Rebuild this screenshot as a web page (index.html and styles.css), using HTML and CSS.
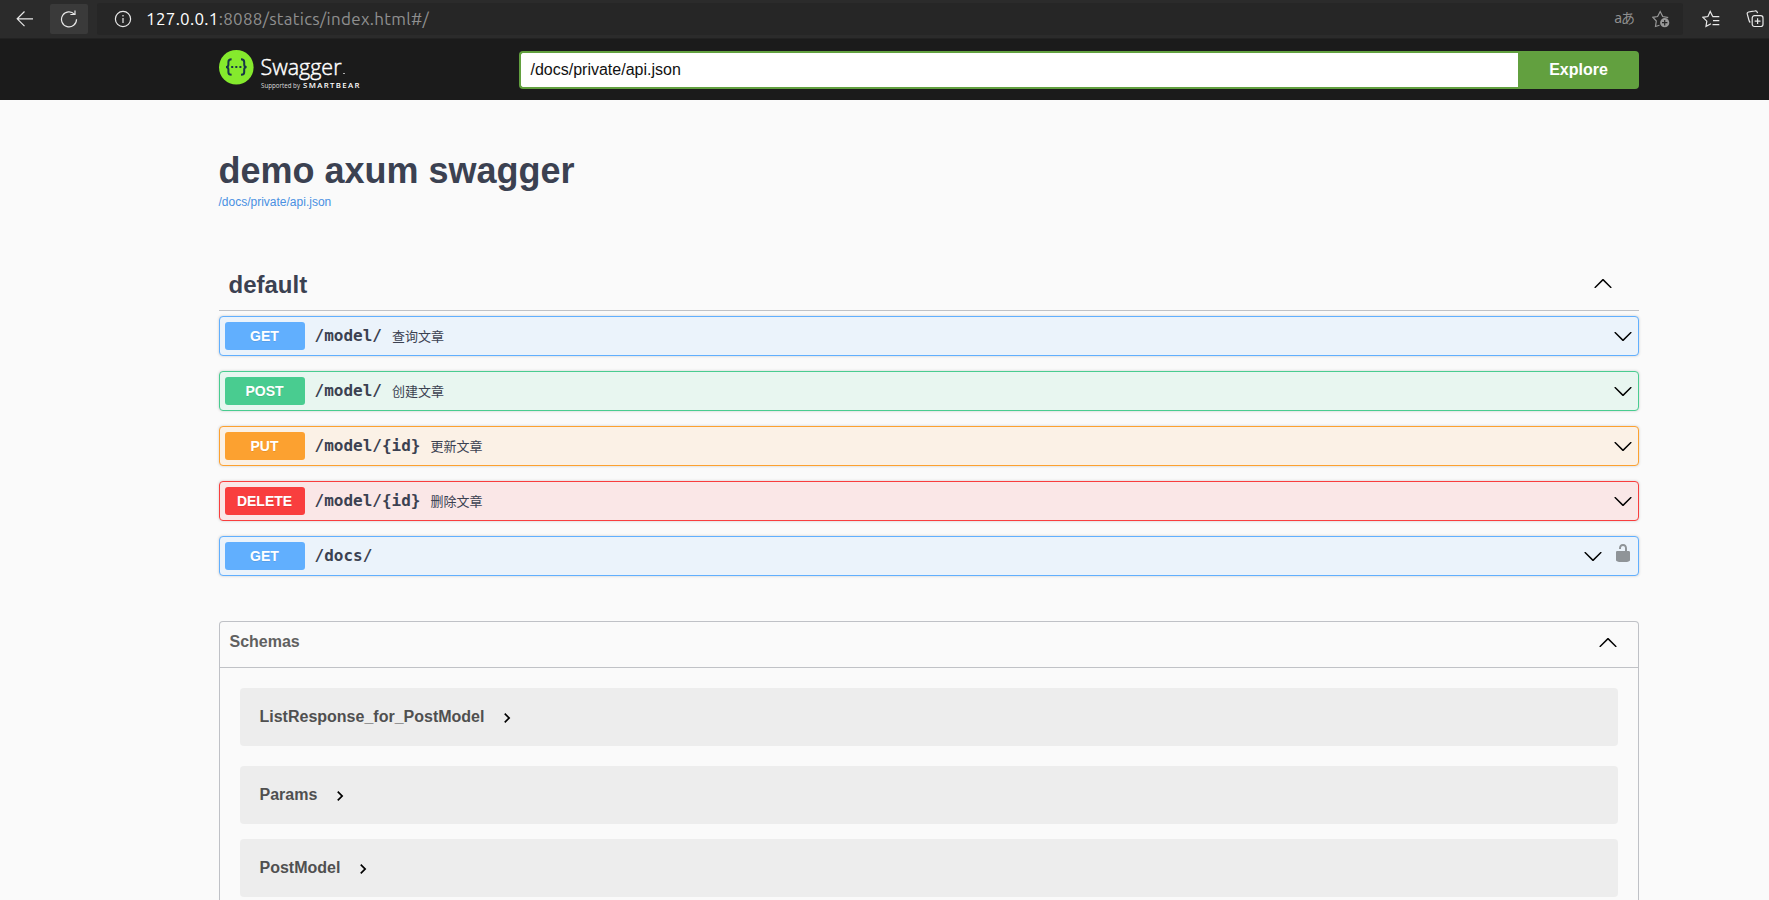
FILE: index.html
```html
<!DOCTYPE html>
<html lang="zh">
<head>
<meta charset="utf-8">
<title>Swagger UI</title>
<link rel="stylesheet" href="styles.css">
</head>
<body>
<svg class="defs" width="0" height="0">
  <symbol id="down" viewBox="0 0 20 20"><path d="M17.418 6.109c.272-.268.709-.268.979 0s.271.701 0 .969l-7.908 7.83c-.27.268-.707.268-.979 0l-7.908-7.83c-.27-.268-.27-.701 0-.969.271-.268.709-.268.979 0L10 13.25l7.418-7.141z"/></symbol>
  <symbol id="up" viewBox="0 0 20 20"><path d="M17.418 14.908c.272.268.709.268.979 0s.271-.701 0-.969l-7.908-7.83c-.27-.268-.707-.268-.979 0l-7.908 7.83c-.27.268-.27.701 0 .969.271.268.709.268.979 0L10 7.767l7.418 7.141z"/></symbol>
  <symbol id="right" viewBox="0 0 24 24"><path d="M10 6L8.59 7.41 13.17 12l-4.58 4.59L10 18l6-6z"/></symbol>
  <symbol id="unlocked" viewBox="0 0 20 20"><path d="M15.8 8H14V5.6C14 2.703 12.665 1 10 1 7.334 1 6 2.703 6 5.6V6h2v-.801C8 3.754 8.797 3 10 3c1.203 0 2 .754 2 2.199V8H4c-.553 0-1 .646-1 1.199V17c0 .549.428 1.139.951 1.307l1.197.387C5.672 18.861 6.55 19 7.1 19h5.8c.549 0 1.428-.139 1.951-.307l1.196-.387c.524-.167.953-.757.953-1.306V9.199C17 8.646 16.352 8 15.8 8z"/></symbol>
</svg>
<header class="browser">
  <svg class="back" width="18" height="18" viewBox="0 0 18 18"><path d="M8.500 1.500 1.200 8.800l7.300 7.300M1.200 8.800H17"/></svg>
  <div class="reload"><svg width="18" height="18" viewBox="0 0 18 18"><path d="M16.500 9.200A7.500 7.500 0 1 1 14.500 4.300M10.400 4.500H15V.4"/></svg></div>
  <div class="address">
    <svg class="info-icon" width="18" height="18" viewBox="0 0 18 18"><circle cx="9" cy="9" r="7.600"/><path d="M9 8v5M9 5v1.500"/></svg>
    <span class="url"><b>127.0.0.1</b>:8088/statics/index.html#/</span>
    <span class="translate">aあ</span>
    <svg class="star" width="18" height="18" viewBox="0 0 18 18"><path d="M7.500 15.300 3.500 16.500 4.300 11 .9 7.300l4.700-.8L8.200 1.500l2.500 5 4.800.8-.7.800"/><circle class="badge" cx="12.700" cy="12.700" r="4.600"/><path class="plus" d="M12.700 10v5.400M10 12.700h5.400"/></svg>
  </div>
  <svg class="favorites" width="18" height="18" viewBox="0 0 18 18"><path d="M9 13.700 4 16.300 4.800 11.200.9 7.300l5-.8L8.200 1.500l2.500 5M10.500 6.700h6.800M11 10.700h6.300M10.500 14.700h6.800"/></svg>
  <svg class="collections" width="18" height="18" viewBox="0 0 18 18"><rect x="6.200" y="5.700" width="10.800" height="10.800" rx="2.200"/><path d="M11.600 8.200v5.800M8.700 11.100h5.800M4.300 12.500C3.400 11.800 3.200 11.200 2.900 10L1.300 4.200C1 3 1.400 2.300 2.600 2L8.800.9c1.300-.3 2.200.2 2.500 1.400l.2.800"/></svg>
</header>
<div class="topbar">
  <div class="wrap topbar-row">
    <svg class="logo" width="150" height="42" viewBox="0 0 150 42">
      <circle cx="17.300" cy="17.300" r="17.300"/>
      <path class="brace" d="M12.600 9.300c-2.500 0-3.200.8-3.200 2.600v2.600c0 1.600-.7 2.500-2.400 2.500 1.700 0 2.400.9 2.400 2.500v2.700c0 1.800.7 2.600 3.200 2.600M22 9.300c2.500 0 3.200.8 3.200 2.600v2.600c0 1.600.7 2.500 2.400 2.500-1.700 0-2.400.9-2.400 2.500v2.700c0 1.800-.7 2.600-3.200 2.600"/>
      <path class="dots" d="M12.200 16h2v2h-2zM16.300 16h2v2h-2zM20.400 16h2v2h-2z"/>
      <text class="brand" x="41.500" y="24.600" textLength="81" lengthAdjust="spacingAndGlyphs">Swagger</text>
      <path class="tm" d="M124 23.500h2"/>
      <text class="supported" x="42" y="38" textLength="39" lengthAdjust="spacingAndGlyphs">Supported by</text>
      <text class="smartbear" x="84" y="38" textLength="56.500">SMARTBEAR</text>
    </svg>
    <form class="search"><div class="field">/docs/private/api.json</div><div class="explore">Explore</div></form>
  </div>
</div>
<main class="wrap">
  <section class="info">
    <h1>demo axum swagger</h1>
    <a>/docs/private/api.json</a>
  </section>
  <h2 class="tag"><span>default</span><svg><use href="#up"/></svg></h2>
  <div class="ops">
    <div class="op get"><span class="method">GET</span><code>/model/</code><span class="desc">查询文章</span><svg><use href="#down"/></svg></div>
    <div class="op post"><span class="method">POST</span><code>/model/</code><span class="desc">创建文章</span><svg><use href="#down"/></svg></div>
    <div class="op put"><span class="method">PUT</span><code>/model/{id}</code><span class="desc">更新文章</span><svg><use href="#down"/></svg></div>
    <div class="op delete"><span class="method">DELETE</span><code>/model/{id}</code><span class="desc">删除文章</span><svg><use href="#down"/></svg></div>
    <div class="op get"><span class="method">GET</span><code>/docs/</code><span class="desc"></span><svg><use href="#down"/></svg><svg class="lock"><use href="#unlocked"/></svg></div>
  </div>
  <section class="models">
    <h3><span>Schemas</span><svg><use href="#up"/></svg></h3>
    <div class="model first"><span>ListResponse_for_PostModel</span><svg><use href="#right"/></svg></div>
    <div class="model"><span>Params</span><svg><use href="#right"/></svg></div>
    <div class="model last"><span>PostModel</span><svg><use href="#right"/></svg></div>
  </section>
</main>
</body>
</html>
```

FILE: styles.css
```css
* { box-sizing: border-box; }
html, body { height: 100%; }
body { margin: 0; background: #fafafa; color: #3b4151; font-family: "Liberation Sans", Arial, sans-serif; overflow: hidden; }
svg { display: block; flex: none; width: 20px; height: 20px; }
.defs { position: absolute; width: 0; height: 0; }
.wrap { width: 1420px; margin-left: 218.5px; }

.browser { display: flex; align-items: center; height: 39px; padding-left: 16px; background: #2b2b2b; border-bottom: 1px solid #222; }
.browser svg { width: 18px; height: 18px; fill: none; stroke: #e8e8e8; stroke-width: 1.2; }
.reload { display: flex; align-items: center; justify-content: center; width: 38px; height: 30px; margin-left: 16px; background: #3a3a3a; border-radius: 2px; }
.address { display: flex; align-items: center; width: 1586px; height: 32px; margin-left: 9px; padding: 0 13px 0 17px; background: #262626; border-radius: 3px; }
.url { margin-left: 14px; color: #8f8f8f; font: 17px/32px Ubuntu, "Noto Sans", sans-serif; letter-spacing: .29px; }
.url b { color: #fff; font-weight: 400; }
.translate { margin-left: auto; color: #8f8f8f; font: 14px "Noto Sans", "Noto Sans CJK JP", sans-serif; letter-spacing: -1px; line-height: 30px; padding-bottom: 2px; white-space: nowrap; }
.browser .star { margin-left: 18px; stroke: #999; }
.star .badge { fill: #999; stroke: none; }
.star .plus { stroke: #262626; }
.favorites { margin-left: 19px; }
.collections { margin-left: 26px; }

.topbar { height: 61px; background: #1b1b1b; }
.topbar-row { display: flex; padding-top: 11px; }
.logo { width: 150px; height: 42px; }
.logo circle { fill: #85ea2d; }
.brace { fill: none; stroke: #173647; stroke-width: 2; }
.dots { fill: #173647; }
.logo text { fill: #fff; font-family: "Open Sans", sans-serif; }
.logo .brand { font-size: 22px; font-weight: 300; stroke: #fff; stroke-width: .45; }
.tm { stroke: #aaa; }
.logo .supported { font-size: 6.8px; fill: #ddd; }
.smartbear { font-size: 7.800px; font-weight: 600; }
.search { display: flex; width: 1120px; height: 38px; margin: 1px 0 0 150px; }
.field { flex: 1; padding-left: 10px; border: 2px solid #62a03f; border-right: 0; border-radius: 4px 0 0 4px; background: #fff; color: #111; font-size: 16px; line-height: 33px; }
.explore { width: 121px; padding-left: 1px; border-radius: 0 4px 4px 0; background: #62a03f; color: #fff; font-size: 16px; font-weight: 700; line-height: 38px; text-align: center; }

.info { height: 160px; padding-top: 50px; }
.info h1 { margin: 0; font-size: 36px; line-height: 41px; }
.info a { display: block; margin-top: 4px; color: #4990e2; font-size: 12px; line-height: 14px; }
.tag { display: flex; justify-content: space-between; align-items: flex-start; height: 51px; margin: 0 0 5px; padding: 11px 26px 0 10px; border-bottom: 1px solid rgba(59,65,81,.3); font-size: 24px; line-height: 28px; }
.tag svg { margin-top: 2px; fill: #000; }
.ops { display: flex; flex-direction: column; gap: 15px; }
.op { display: flex; align-items: center; height: 40px; padding: 0 5px; border: 1px solid; border-radius: 4px; box-shadow: 0 0 3px rgba(0,0,0,.19); }
.op svg { fill: #000; }
.method { width: 80px; height: 28px; border-radius: 3px; color: #fff; font-size: 14px; font-weight: 700; line-height: 28px; text-align: center; text-shadow: 0 1px 0 rgba(0,0,0,.1); }
.op code { margin-left: 10px; color: #3b4151; font: 700 16px/20px "DejaVu Sans Mono", monospace; }
.desc { flex: 1; margin-left: 10px; color: #3b4151; font: 13px/20px "Liberation Sans", "Noto Sans CJK SC", sans-serif; padding-top: 2px; }
.get { border-color: #61affe; background: #ebf3fb; }
.get .method { background: #61affe; }
.post { border-color: #49cc90; background: #e8f6f0; }
.post .method { background: #49cc90; }
.put { border-color: #fca130; background: #fbf1e6; }
.put .method { background: #fca130; }
.delete { border-color: #f93e3e; background: #fae7e7; }
.delete .method { background: #f93e3e; }
.op .lock { margin: 0 0 6px 10px; fill: #8f9498; }

.models { height: 279px; margin-top: 45px; border: 1px solid rgba(59,65,81,.3); border-bottom: 0; border-radius: 4px 4px 0 0; }
.models h3 { display: flex; justify-content: space-between; height: 46px; margin: 0 0 20px; padding: 10px 20px 0 10px; border-bottom: 1px solid rgba(59,65,81,.3); color: #606060; font-size: 16px; line-height: 20px; }
.models h3 svg { fill: #000; }
.model { display: flex; align-items: center; height: 58px; margin: 0 20px 15px; padding-left: 20px; border-radius: 4px; background: #ededed; color: #505050; font-size: 16px; font-weight: 700; }
.model.first { margin-bottom: 20px; }
.model.last { margin-bottom: 0; }
.model span { padding-bottom: 1px; }
.model svg { margin: 1px 0 0 13px; fill: #000; }
```
